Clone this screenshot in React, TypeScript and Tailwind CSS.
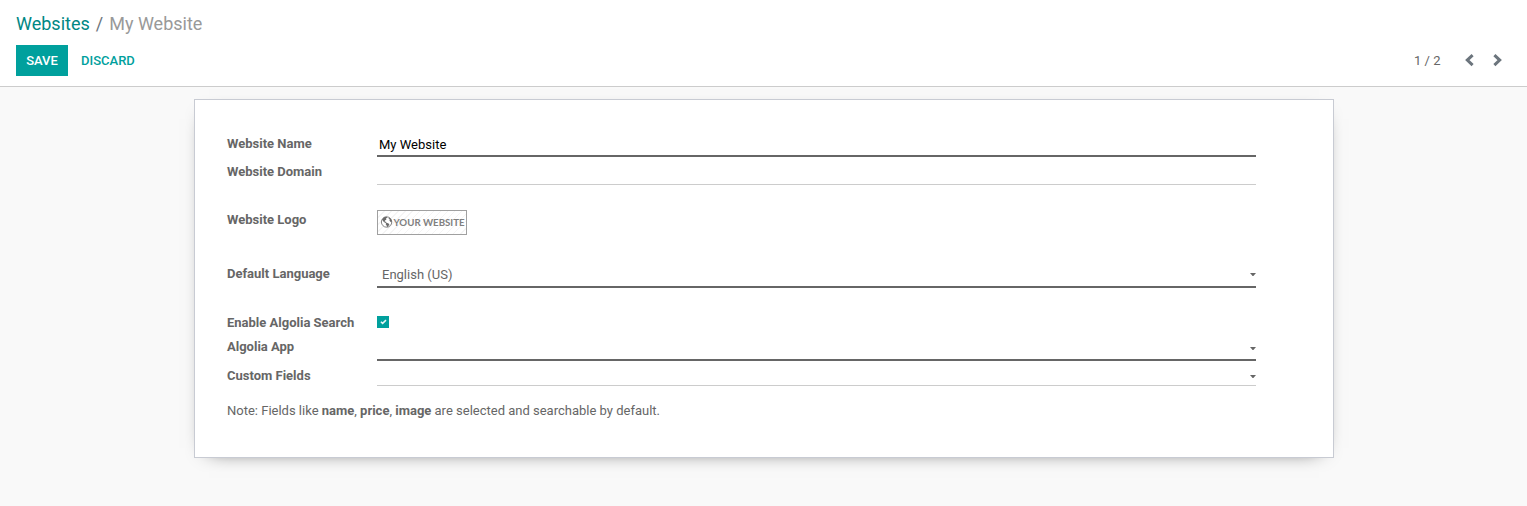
import type { ReactNode } from "react";

function Row({ label, className, children }: { label: string; className: string; children?: ReactNode }) {
  return (
    <div className={`flex ${className}`}>
      <div className="w-[150px] shrink-0 whitespace-nowrap pt-px font-bold leading-5">{label}</div>
      {children}
    </div>
  );
}

function Caret({ className }: { className: string }) {
  return (
    <svg className={`ml-auto block h-[3px] w-[6px] ${className}`} viewBox="0 0 6 3" fill="currentColor">
      <path d="M0 0H6L3.4 3H2.6Z" />
    </svg>
  );
}

function Chevron({ flip }: { flip?: boolean }) {
  return (
    <svg className={`h-[13px] w-[9px] ${flip ? "-scale-x-100" : ""}`} viewBox="0 0 9 13" fill="none" stroke="#6c757d" strokeWidth="3">
      <path d="M7.6 1.1L2.3 6.1L7.6 11.1" />
    </svg>
  );
}

function Logo() {
  return (
    <div className="mt-px flex h-[25px] w-[90px] items-center border border-[#a0a0a0] bg-[repeating-linear-gradient(135deg,#ffffff_0px,#ffffff_4px,#f5f5f5_4px,#f5f5f5_5px)] pl-[3px]">
      <svg className="-mt-px h-3 w-3 shrink-0" viewBox="0 0 12 12">
        <circle cx="5.6" cy="6" r="5.2" fill="#fff" stroke="#777" strokeWidth="0.9" />
        <path d="M1 3.6L3 1.2L5.4 0.8L6.4 1.6L5 2.4L5.4 3.6L4 4.4L3.6 5.4L5 5.8L5.6 6.6L4.4 7L2.6 5.8Z" fill="#6a6a6a" />
        <path d="M5.4 6.8L7.6 7.4L8.4 8.6L7.2 10.2L6 11.2L5.6 9.4L4.6 8Z" fill="#6a6a6a" />
        <path d="M7.8 1.4L9.8 2.8L10.8 5L10.6 6.6L9.4 5.8L8.4 4.6L8.8 3.4L7.6 2.6Z" fill="#6a6a6a" />
      </svg>
      <span className="-mt-px ml-[0.5px] whitespace-nowrap font-['Lato',sans-serif] text-[9.7px] font-bold leading-3 text-[#808080]">YOUR WEBSITE</span>
    </div>
  );
}

export default function App() {
  return (
    <div className="h-[506px] overflow-hidden bg-[#f9f9f9] font-['Roboto',sans-serif] text-[13px] text-[#666]">
      <header className="h-[87px] border-b border-[#ccc] bg-white px-4 pt-[10px]">
        <nav className="flex h-[27px] items-center text-[18px] leading-[27px]">
          <a className="text-[#008784]">Websites</a>
          <span className="mx-[6px] text-[#6c757d]">/</span>
          <span className="text-[#999]">My Website</span>
        </nav>
        <div className="mt-2 flex h-[31px] items-center">
          <button className="h-[31px] w-[52px] bg-[#00a09d] font-medium text-white">SAVE</button>
          <button className="ml-[13px] font-medium text-[#00a09d]">DISCARD</button>
          <span className="ml-auto">1 / 2</span>
          <div className="ml-[24.5px] mr-[9px] flex items-center gap-[19px]">
            <Chevron />
            <Chevron flip />
          </div>
        </div>
      </header>

      <main className="ml-[194px] mt-3 h-[359px] w-[1140px] border border-[#c8cbd3] bg-white px-8 pt-[33px] shadow-[0_5px_20px_-15px_#000]">
        <Row label="Website Name" className="h-6">
          <div className="w-[879px] border-b-2 border-[#666] pl-[2px] pt-[2px] leading-5 text-black">My Website</div>
        </Row>
        <Row label="Website Domain" className="mt-1 h-6">
          <div className="w-[879px] border-b border-[#ccc]" />
        </Row>
        <Row label="Website Logo" className="mt-6 h-[26px]">
          <Logo />
        </Row>
        <Row label="Default Language" className="mt-7 h-[25px]">
          <div className="flex w-[879px] border-b-2 border-[#666] pl-[5px] leading-5">
            <span className="pt-[2px]">English (US)</span>
            <Caret className="mt-[10px]" />
          </div>
        </Row>
        <Row label="Enable Algolia Search" className="mt-6 h-5">
          <div className="mt-1 flex h-3 w-3 items-center justify-center bg-[#00a09d]">
            <svg className="h-[6px] w-[7px]" viewBox="0 0 7 6" fill="none" stroke="#e6f6f5" strokeWidth="1.5">
              <path d="M0.9 2.8L2.6 4.4L6 1.1" />
            </svg>
          </div>
        </Row>
        <Row label="Algolia App" className="mt-1 h-[25px]">
          <div className="flex w-[879px] border-b-2 border-[#666]">
            <Caret className="mt-[11px]" />
          </div>
        </Row>
        <Row label="Custom Fields" className="mt-1 h-[21px]">
          <div className="flex w-[879px] border-b border-[#ccc]">
            <Caret className="mt-[10px]" />
          </div>
        </Row>
        <p className="mt-[15px] leading-5">
          Note: Fields like <b>name</b>, <b>price</b>, <b>image</b> are selected and searchable by default.
        </p>
      </main>
    </div>
  );
}
